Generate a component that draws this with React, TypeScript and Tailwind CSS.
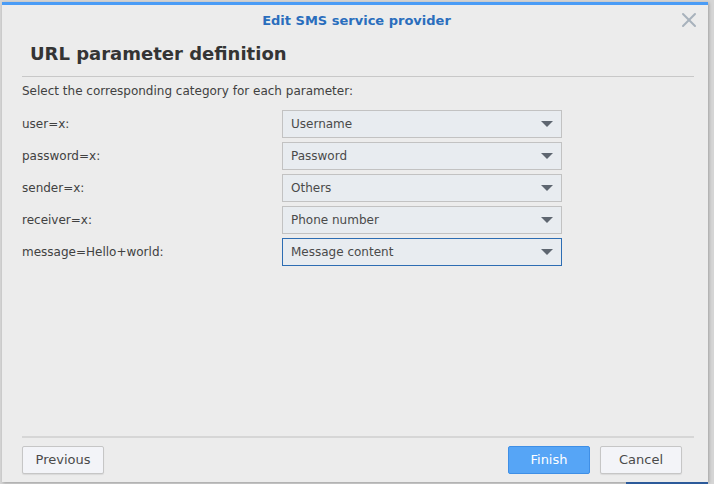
import { X } from "lucide-react"

const rows = [
  { label: "user=x:", value: "Username" },
  { label: "password=x:", value: "Password" },
  { label: "sender=x:", value: "Others" },
  { label: "receiver=x:", value: "Phone number" },
  { label: "message=Hello+world:", value: "Message content", focused: true },
]

function Select({ value, focused }: { value: string; focused?: boolean }) {
  return (
    <div
      className={
        focused
          ? "flex h-[28px] w-[280px] items-center justify-between border border-[#2d6db3] bg-[#e8ecf0] pl-[8px] pr-[8px] text-[#4a4a4a]"
          : "flex h-[28px] w-[280px] items-center justify-between border border-[#c2c2c2] bg-[#e8ecf0] pl-[8px] pr-[8px] text-[#4a4a4a]"
      }
    >
      <span>{value}</span>
      <svg width="12" height="6" viewBox="0 0 12 6">
        <path d="M0 0 H12 L6 6 Z" fill="#5e6670" />
      </svg>
    </div>
  )
}

export default function App() {
  return (
    <div className="relative h-[484px] w-[714px] overflow-hidden bg-[#d5d5d5] pl-[2px] pt-[2px] font-['DejaVu_Sans',sans-serif] text-[12px]">
      <div className="flex h-[480px] w-[706px] flex-col border-t-[3px] border-[#4a9cf6] bg-[#ececec] shadow-[1px_1px_3px_rgba(0,0,0,0.25)]">
        {/* title bar */}
        <div className="relative flex h-[32px] items-center justify-center">
          <span className="pl-[3px] text-[13px] font-bold text-[#2a6ebd]">Edit SMS service provider</span>
          <X className="absolute right-[7px] top-[3px] text-[#a8b2bc]" size={24} strokeWidth={2} />
        </div>

        <div className="flex flex-1 flex-col pl-[20px] pr-[14px]">
          <h1 className="pl-[8px] pt-px text-[18px] leading-[32px] font-bold text-[#343434]">URL parameter definition</h1>
          <div className="mt-[6px] h-px bg-[#c8c8c8]" />
          <p className="mt-[6px] leading-[16px] text-[#414141]">Select the corresponding category for each parameter:</p>

          <div className="mt-[11px] flex flex-col gap-[4px]">
            {rows.map((r) => (
              <div key={r.label} className="flex items-center">
                <span className="w-[260px] text-[#414141]">{r.label}</span>
                <Select value={r.value} focused={r.focused} />
              </div>
            ))}
          </div>

          <div className="flex-1" />
          <div className="h-[2px] bg-[#d6d6d6]" />
          <div className="flex items-center pb-[8px] pt-[8px]">
            <button className="h-[28px] w-[82px] rounded-[2px] border border-[#c6c6c6] bg-[#f3f4f8] text-[13px] text-[#4a4a4a] shadow-[0_1px_1px_rgba(0,0,0,0.08)]">
              Previous
            </button>
            <div className="flex-1" />
            <button className="h-[28px] w-[82px] rounded-[2px] border border-[#3f8fe6] bg-[#56a5f6] text-[13px] text-white">
              Finish
            </button>
            <button className="ml-[10px] mr-[12px] h-[28px] w-[82px] rounded-[2px] border border-[#c6c6c6] bg-[#f3f4f8] text-[13px] text-[#4a4a4a] shadow-[0_1px_1px_rgba(0,0,0,0.08)]">
              Cancel
            </button>
          </div>
        </div>
      </div>
      <div className="absolute bottom-0 right-[6px] h-[2px] w-[82px] bg-[#2c5a9a]" />
    </div>
  )
}
